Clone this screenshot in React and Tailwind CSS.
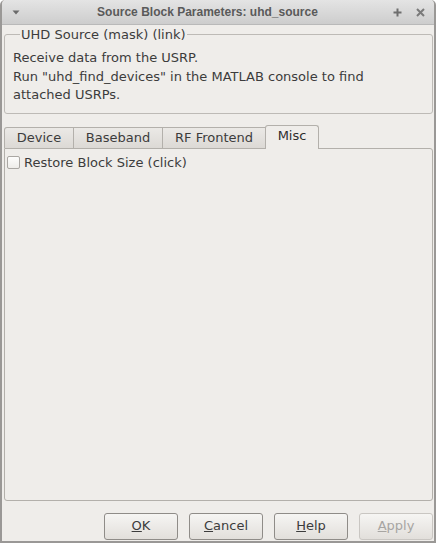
import React from "react";

const tabs = [
  { label: "Device", w: "w-[70px]" },
  { label: "Baseband", w: "w-[90px]" },
  { label: "RF Frontend", w: "w-[104px]" },
];

function DialogButton({ children, disabled }) {
  return (
    <button
      disabled={disabled}
      className={`w-[74px] h-[27px] rounded-[3px] border text-[13px] bg-gradient-to-b from-[#f6f5f3] to-[#e2dfdb] ${
        disabled ? "border-[#c9c6c2] text-[#a7a5a2]" : "border-[#8f8c88] text-[#3c3c3c]"
      }`}
    >
      {children}
    </button>
  );
}

export default function App() {
  return (
    <div className="w-[436px] h-[543px] flex flex-col bg-[#efedea] border-x-2 border-b-2 border-[#9a9896] rounded-t-[5px] overflow-hidden font-['DejaVu_Sans',sans-serif] text-[#3c3c3c]">
      {/* title bar */}
      <div className="h-[25px] shrink-0 flex items-center pl-[9px] pr-[9px] bg-gradient-to-b from-[#e4e4e4] to-[#cdcdcd] border-b border-[#b9b9b9]">
        <svg width="8" height="5" viewBox="0 0 8 5" className="mt-[1px] ml-[1px]">
          <path d="M0.5 0.5 L7.5 0.5 L4 4.5 Z" fill="#6b6b6b" />
        </svg>
        <div className="flex-1 text-center font-['Liberation_Sans',sans-serif] font-bold text-[12px] text-[#5a5a5a] pl-[2px]">
          Source Block Parameters: uhd_source
        </div>
        <svg width="9" height="9" viewBox="0 0 9 9" className="mr-[14px]">
          <path d="M4.5 0.5 V8.5 M0.5 4.5 H8.5" stroke="#6e6e6e" strokeWidth="2" />
        </svg>
        <svg width="9" height="9" viewBox="0 0 9 9">
          <path d="M1 1 L8 8 M8 1 L1 8" stroke="#7a7a7a" strokeWidth="2" />
        </svg>
      </div>

      <div className="flex-1 flex flex-col pl-[2px] pr-[1px] pt-[1px] text-[13px]">
        {/* group box */}
        <fieldset className="border border-[#bdbab6] rounded-[3px] px-[8px] pb-[8px] mx-0">
          <legend className="px-[1px] ml-[7px] leading-[17px]">UHD Source (mask) (link)</legend>
          <div className="leading-[18.5px] pt-[6px]">
            <div>Receive data from the USRP.</div>
            <div>Run "uhd_find_devices" in the MATLAB console to find</div>
            <div>attached USRPs.</div>
          </div>
        </fieldset>

        {/* tabs */}
        <div className="flex items-end mt-[10px] h-[24px]">
          {tabs.map((t) => (
            <div
              key={t.label}
              className={`${t.w} h-[21px] flex items-center justify-center border border-b-0 border-[#b3b0ab] -mr-px first:rounded-tl-[3px] bg-gradient-to-b from-[#ebe9e6] to-[#dcd9d5]`}
            >
              {t.label}
            </div>
          ))}
          <div className="w-[54px] h-[24px] flex items-center justify-center border border-b-0 border-[#b3b0ab] rounded-t-[3px] bg-[#efedea] relative top-px pb-[2px] text-[#2e2e2e]">
            Misc
          </div>
        </div>

        {/* tab pane */}
        <div className="h-[353px] border border-[#b3b0ab] rounded-b-[3px] rounded-tr-[3px] pl-[2px] pt-[4px]">
          <label className="flex items-center gap-[4px]">
            <span className="w-[13px] h-[13px] border border-[#aaa7a3] rounded-[2px] bg-gradient-to-b from-[#fdfdfc] to-[#eeece9]" />
            <span>Restore Block Size (click)</span>
          </label>
        </div>

        {/* buttons */}
        <div className="flex justify-end gap-[11px] mt-[12px]">
          <DialogButton>
            <span className="underline">O</span>K
          </DialogButton>
          <DialogButton>
            <span className="underline">C</span>ancel
          </DialogButton>
          <DialogButton>
            <span className="underline">H</span>elp
          </DialogButton>
          <DialogButton disabled>
            <span className="underline">A</span>pply
          </DialogButton>
        </div>
      </div>
    </div>
  );
}
